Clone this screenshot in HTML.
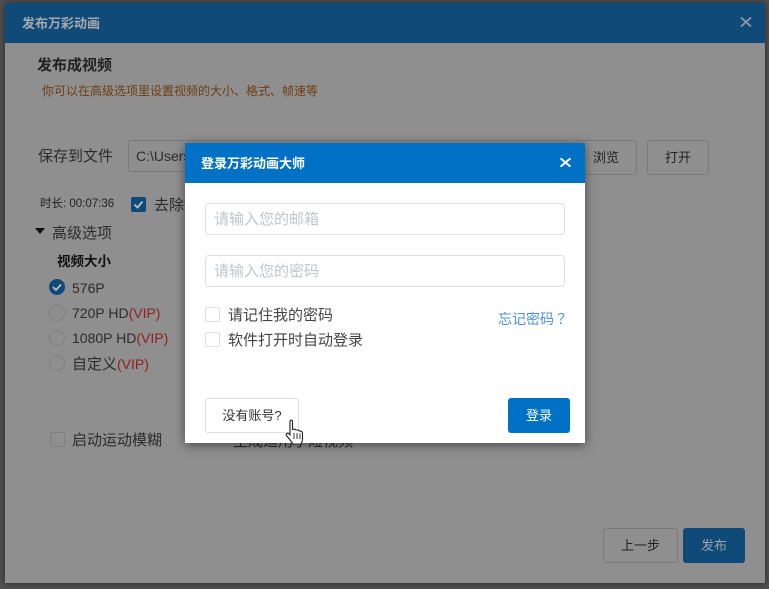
<!DOCTYPE html>
<html>
<head>
<meta charset="utf-8">
<style>
html,body{margin:0;padding:0;width:769px;height:589px;overflow:hidden;background:#505050;}
*{box-sizing:border-box;}
body{font-family:"Liberation Sans","Noto Sans CJK SC",sans-serif;color:#222;position:relative;}
.a{position:absolute;white-space:nowrap;}
#win{position:absolute;left:5px;top:3px;width:760px;height:580px;background:#8f8f8f;box-shadow:0 0 6px rgba(0,0,0,.5);}
.btn{position:absolute;border:1px solid #7a7a7a;border-radius:3px;text-align:center;font-size:13px;color:#222;}
.r{position:absolute;left:49px;width:16px;height:16px;border-radius:50%;border:1px solid #7f7f7f;}
.l{position:absolute;left:72px;font-size:14px;color:#2b2b2b;white-space:nowrap;line-height:20px;}
.l i{font-style:normal;color:#8f2020;}
.inp{position:absolute;left:205px;width:360px;height:32px;border:1px solid #dcdfe6;border-radius:4px;background:#fff;font-size:15px;color:#c0c4cc;line-height:32px;padding-left:8px;}
.cb{position:absolute;left:205px;width:15px;height:15px;border:1px solid #dcdfe6;border-radius:2px;background:#fff;}
</style>
</head>
<body>
<div id="win"></div>
<div class="a" style="left:5px;top:3px;width:760px;height:40px;background:#0f4a78;"></div>
<div class="a" style="left:22px;top:15px;font-size:13px;font-weight:bold;color:#a3a9ad;line-height:18px;">发布万彩动画</div>
<svg class="a" style="left:740px;top:17px;" width="12" height="10" viewBox="0 0 12 10"><path d="M1 0.5L11 9.5M11 0.5L1 9.5" stroke="#8f9aa3" stroke-width="1.8" fill="none"/></svg>

<div class="a" style="left:37px;top:56px;font-size:15px;font-weight:bold;color:#222;line-height:20px;">发布成视频</div>
<div class="a" style="left:42px;top:82px;font-size:12px;color:#6f3d10;line-height:18px;">你可以在高级选项里设置视频的大小、格式、帧速等</div>

<div class="a" style="left:38px;top:147px;font-size:15px;color:#2b2b2b;line-height:20px;">保存到文件</div>
<div class="a" style="left:128px;top:140px;width:440px;height:32px;border:1px solid #7a7a7a;border-radius:3px;font-size:14px;line-height:30px;padding-left:7px;color:#2b2b2b;">C:\Users</div>
<div class="btn" style="left:575px;top:140px;width:62px;height:35px;line-height:34px;">浏览</div>
<div class="btn" style="left:647px;top:140px;width:62px;height:35px;line-height:34px;">打开</div>

<div class="a" style="left:40px;top:195px;font-size:11.5px;color:#222;line-height:18px;">时长: 00:07:36</div>
<div class="a" style="left:131px;top:197px;width:15px;height:15px;background:#0f4a78;border-radius:2px;"></div>
<svg class="a" style="left:131px;top:197px;" width="15" height="15" viewBox="0 0 15 15"><path d="M3.5 7.5L6.5 10.5L11.5 4.5" stroke="#b5c2cc" stroke-width="1.8" fill="none"/></svg>
<div class="a" style="left:154px;top:196px;font-size:15px;color:#2b2b2b;line-height:20px;">去除'</div>

<svg class="a" style="left:35px;top:228px;" width="10" height="6" viewBox="0 0 10 6"><path d="M0 0H10L5 6Z" fill="#111"/></svg>
<div class="a" style="left:52px;top:224px;font-size:15px;color:#2b2b2b;line-height:20px;">高级选项</div>
<div class="a" style="left:57px;top:253px;font-size:13.5px;font-weight:bold;color:#111;line-height:18px;">视频大小</div>

<div class="a" style="left:49px;top:279px;width:16px;height:16px;border-radius:50%;background:#0f4a78;"></div>
<svg class="a" style="left:49px;top:279px;" width="16" height="16" viewBox="0 0 16 16"><path d="M4 8L7 11L12 5.5" stroke="#b5c2cc" stroke-width="1.8" fill="none"/></svg>
<div class="l" style="top:278px;">576P</div>
<div class="r" style="top:305px;"></div>
<div class="l" style="top:303px;">720P HD<i>(VIP)</i></div>
<div class="r" style="top:330px;"></div>
<div class="l" style="top:328px;">1080P HD<i>(VIP)</i></div>
<div class="r" style="top:355px;"></div>
<div class="l" style="top:354px;"><span style="font-size:15px;">自定义</span><i>(VIP)</i></div>

<div class="a" style="left:50px;top:432px;width:15px;height:15px;border:1px solid #7f7f7f;border-radius:2px;"></div>
<div class="l" style="top:431px;font-size:15px;">启动运动模糊</div>
<div class="a" style="left:233px;top:432px;font-size:15px;color:#2b2b2b;line-height:20px;">生成适用于短视频</div>

<div class="btn" style="left:603px;top:528px;width:75px;height:35px;line-height:34px;">上一步</div>
<div class="btn" style="left:683px;top:528px;width:62px;height:35px;line-height:35px;background:#0f4a78;border:none;color:#9aa5ad;">发布</div>

<!-- Dialog -->
<div class="a" style="left:185px;top:143px;width:400px;height:300px;background:#fff;box-shadow:0 2px 10px rgba(0,0,0,.5);"></div>
<div class="a" style="left:185px;top:143px;width:400px;height:40px;background:#0071c5;"></div>
<div class="a" style="left:201px;top:155px;font-size:13px;font-weight:bold;color:#fff;line-height:18px;">登录万彩动画大师</div>
<svg class="a" style="left:560px;top:158px;" width="11" height="9" viewBox="0 0 11 9"><path d="M0.5 0.3L10.5 8.7M10.5 0.3L0.5 8.7" stroke="#fff" stroke-width="2" fill="none"/></svg>

<div class="inp" style="top:203px;">请输入您的邮箱</div>
<div class="inp" style="top:255px;">请输入您的密码</div>

<div class="cb" style="top:307px;"></div>
<div class="a" style="left:228px;top:306px;font-size:15px;color:#444;line-height:20px;">请记住我的密码</div>
<div class="cb" style="top:332px;"></div>
<div class="a" style="left:228px;top:331px;font-size:15px;color:#444;line-height:20px;">软件打开时自动登录</div>
<div class="a" style="left:498px;top:309px;font-size:14px;color:#4a90e2;line-height:20px;font-family:'Noto Sans CJK SC',sans-serif;">忘记密码<span style="font-family:'Noto Sans CJK TC',sans-serif;">？</span></div>

<div class="a" style="left:205px;top:398px;width:94px;height:35px;border:1px solid #dcdfe6;border-radius:3px;background:#fff;text-align:center;font-size:13px;line-height:34px;color:#333;">没有账号?</div>
<div class="a" style="left:508px;top:398px;width:62px;height:35px;background:#0071c5;border-radius:3px;text-align:center;font-size:13px;line-height:35px;color:#fff;">登录</div>

<svg class="a" style="left:285px;top:419px;" width="20" height="26" viewBox="0 0 20 26"><path d="M5 2.5C5 0.8 7.5 0.8 7.5 2.5V10.5C9 10 10.5 10.2 11 11C12.5 10.7 13.8 11 14.2 12C15.8 11.8 17.5 12.5 17.5 14V20C17.5 22.5 16.5 24 16 25H8C7 23.5 5.5 21.5 1.5 16.5C0.5 15 2.3 13.4 3.8 14.6L5 15.8Z" fill="#fff" stroke="#222" stroke-width="1.1"/><path d="M9 14V20M12 14V20M15 14.5V20" stroke="#222" stroke-width="0.9"/></svg>
</body>
</html>
